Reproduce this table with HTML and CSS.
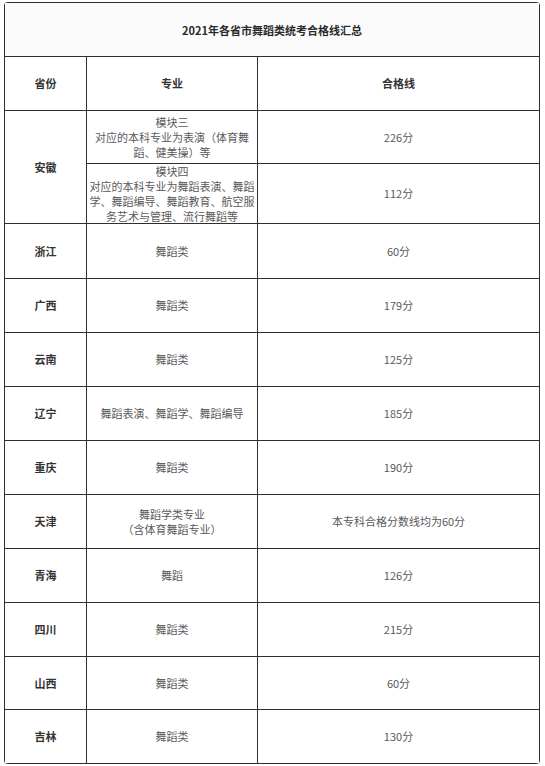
FILE: index.html
```html
<!DOCTYPE html>
<html lang="zh-CN">
<head>
<meta charset="utf-8">
<title>2021年各省市舞蹈类统考合格线汇总</title>
<link rel="stylesheet" href="styles.css">
</head>
<body>
<div class="sheet">
  <div class="cell title">2021年各省市舞蹈类统考合格线汇总</div>

  <div class="cell head">省份</div>
  <div class="cell head">专业</div>
  <div class="cell head">合格线</div>

  <div class="cell prov ah">安徽</div>
  <div class="cell">模块三<br>对应的本科专业为表演（体育舞蹈、健美操）等</div>
  <div class="cell">226分</div>
  <div class="cell">模块四<br>对应的本科专业为舞蹈表演、舞蹈学、舞蹈编导、舞蹈教育、航空服务艺术与管理、流行舞蹈等</div>
  <div class="cell">112分</div>

  <div class="cell prov">浙江</div>
  <div class="cell">舞蹈类</div>
  <div class="cell">60分</div>

  <div class="cell prov">广西</div>
  <div class="cell">舞蹈类</div>
  <div class="cell">179分</div>

  <div class="cell prov">云南</div>
  <div class="cell">舞蹈类</div>
  <div class="cell">125分</div>

  <div class="cell prov">辽宁</div>
  <div class="cell">舞蹈表演、舞蹈学、舞蹈编导</div>
  <div class="cell">185分</div>

  <div class="cell prov">重庆</div>
  <div class="cell">舞蹈类</div>
  <div class="cell">190分</div>

  <div class="cell prov">天津</div>
  <div class="cell">舞蹈学类专业<br>（含体育舞蹈专业）</div>
  <div class="cell">本专科合格分数线均为60分</div>

  <div class="cell prov">青海</div>
  <div class="cell">舞蹈</div>
  <div class="cell">126分</div>

  <div class="cell prov">四川</div>
  <div class="cell">舞蹈类</div>
  <div class="cell">215分</div>

  <div class="cell prov">山西</div>
  <div class="cell">舞蹈类</div>
  <div class="cell">60分</div>

  <div class="cell prov">吉林</div>
  <div class="cell">舞蹈类</div>
  <div class="cell">130分</div>
</div>
</body>
</html>
```

FILE: styles.css
```css
html, body {
  margin: 0;
  padding: 0;
  background: #ffffff;
}

body {
  padding: 2px 0 0 4px;
  font-family: "Noto Sans CJK SC", "Microsoft YaHei", sans-serif;
  font-size: 11px;
  line-height: 15px;
  color: #5a5a5a;
}

.sheet {
  width: 536px;
  display: grid;
  grid-template-columns: 81px 170px 281px;
  grid-template-rows: 53px 53px 52px 59px 54px 53px 53px 53px 53px 53px 53px 53px 52px 53px;
  gap: 1px;
  padding: 1px;
  box-sizing: border-box;
  background: #2f2f2f;
  border-radius: 4px;
  overflow: hidden;
}

.cell {
  background: #ffffff;
  display: flex;
  align-items: center;
  justify-content: center;
  text-align: center;
  padding: 0 1px;
}

.title {
  grid-column: 1 / 4;
  background: #fbfbfb;
  font-weight: bold;
  color: #2b2b2b;
  padding-top: 1px;
}

.head {
  font-weight: bold;
  color: #333333;
}

.prov {
  font-weight: bold;
  color: #333333;
}

.ah {
  grid-row: 3 / 5;
}
```
